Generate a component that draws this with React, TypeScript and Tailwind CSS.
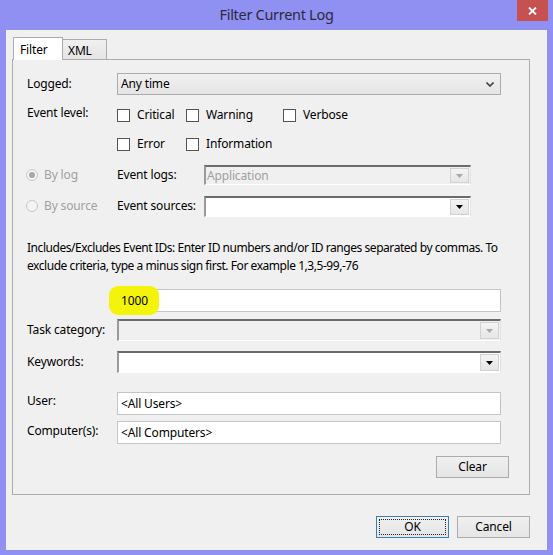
import clsx from "clsx";

const DownArrow = ({ disabled }: { disabled?: boolean }) => (
  <svg width="7" height="4" viewBox="0 0 7 4">
    <path d="M0 0h7L3.5 4z" fill={disabled ? "#a8a8a8" : "#000"} />
  </svg>
);

interface ComboProps {
  width: string;
  value?: string;
  disabled?: boolean;
  height?: string;
}

const SunkenCombo = ({ width, value, disabled, height }: ComboProps) => (
  <div
    className={clsx(
      "flex items-center border-t-2 border-l-2 border-r border-b border-t-[#6b6b6b] border-l-[#9a9a9a] border-r-[#e3e3e3] border-b-[#ffffff] pr-[1px]",
      width,
      height ?? "h-[21px]",
      disabled ? "bg-[#f0f0f0]" : "bg-white",
    )}
  >
    <span className="flex-1 pl-[1px] text-[#a0a0a0] leading-none">{value}</span>
    <div className="flex items-center justify-center w-[19px] h-[calc(100%-2px)] border border-[#d2d2d2] bg-linear-to-b from-[#f4f4f4] to-[#e6e6e6]">
      <DownArrow disabled={disabled} />
    </div>
  </div>
);

const Checkbox = ({ label, width }: { label: string; width: string }) => (
  <div className={clsx("flex items-center gap-[7px]", width)}>
    <span className="w-[13px] h-[13px] border border-[#555] bg-white" />
    <span>{label}</span>
  </div>
);

const Radio = ({ label, checked }: { label: string; checked?: boolean }) => (
  <div className="flex items-center gap-[6px] text-[#a0a0a0]">
    <span className="w-[12px] h-[12px] rounded-full border border-[#c8c8c8] bg-[#f4f4f4] flex items-center justify-center">
      {checked && <span className="w-[6px] h-[6px] rounded-full bg-[#a8a8a8]" />}
    </span>
    <span>{label}</span>
  </div>
);

const TextBox = ({ value }: { value?: string }) => (
  <div className="h-[23px] w-[384px] border border-[#c5c5c5] bg-white flex items-center pl-[3px]">
    {value}
  </div>
);

const Button = ({ label, isDefault, className }: { label: string; isDefault?: boolean; className?: string }) => (
  <div
    className={clsx(
      "w-[73px] h-[22px] border flex items-center justify-center bg-linear-to-b from-[#f0f0f0] to-[#e5e5e5] p-[2px]",
      isDefault ? "border-[#3c7fb1]" : "border-[#acacac]",
      className,
    )}
  >
    <div
      className={clsx(
        "w-full h-full flex items-center justify-center",
        isDefault && "border border-dotted border-[#222]",
      )}
    >
      {label}
    </div>
  </div>
);

export default function App() {
  return (
    <div className="w-[553px] h-[555px] bg-[#9090f3] flex flex-col font-['Noto_Sans',sans-serif] text-[12px] tracking-[-0.15px] text-black">
      {/* title bar */}
      <div className="h-[30px] flex items-center justify-center relative shrink-0">
        <span className="text-[14.5px] text-[#2a2a3a] tracking-[-0.3px]">Filter Current Log</span>
        <div className="absolute right-[5px] top-0 w-[31px] h-[21px] bg-[#c75050] flex items-center justify-center">
          <svg width="9" height="8" viewBox="0 0 9 8">
            <path d="M1 0.5L8 7.5M8 0.5L1 7.5" stroke="#fff" strokeWidth="1.8" />
          </svg>
        </div>
      </div>

      {/* body */}
      <div className="mx-[6px] h-[520px] bg-[#f0f0f0] pt-[7px] pl-[6px] pr-[17px]">
        {/* tabs */}
        <div className="flex items-end h-[22px] pl-[1px]">
          <div className="relative z-10 h-[23px] -mb-[1px] w-[50px] bg-white border border-b-0 border-[#acacac] pl-[6px] pt-[3px]">
            Filter
          </div>
          <div className="h-[20px] w-[44px] border border-l-0 border-b-0 border-[#acacac] bg-linear-to-b from-[#f0f0f0] to-[#e5e5e5] pl-[5px] pt-[2px]">
            XML
          </div>
        </div>

        {/* panel */}
        <div className="h-[436px] border border-[#acacac] bg-[#f0f0f0] flex flex-col pl-[14px] pr-[20px]">
          <div className="flex items-center mt-[13px] h-[22px]">
            <span className="w-[90px]">Logged:</span>
            <div className="w-[384px] h-[22px] border border-[#acacac] bg-linear-to-b from-[#f0f0f0] to-[#e5e5e5] flex items-center pl-[3px] pr-[6px]">
              <span className="flex-1">Any time</span>
              <svg width="8" height="5" viewBox="0 0 8 5">
                <path d="M0.5 0.5L4 4L7.5 0.5" stroke="#444" strokeWidth="1.6" fill="none" />
              </svg>
            </div>
          </div>

          <div className="flex items-center mt-[9px] h-[22px]">
            <span className="w-[90px] self-start">Event level:</span>
            <Checkbox label="Critical" width="w-[69px]" />
            <Checkbox label="Warning" width="w-[97px]" />
            <Checkbox label="Verbose" width="w-[80px]" />
          </div>
          <div className="flex items-center mt-[7px] h-[22px]">
            <span className="w-[90px]" />
            <Checkbox label="Error" width="w-[69px]" />
            <Checkbox label="Information" width="w-[97px]" />
          </div>

          <div className="flex items-center mt-[10px] h-[20px]">
            <div className="w-[90px] -ml-[1px]">
              <Radio label="By log" checked />
            </div>
            <span className="w-[88px] pl-[1px]">Event logs:</span>
            <SunkenCombo width="w-[267px]" value="Application" disabled height="h-[20px]" />
          </div>
          <div className="flex items-center mt-[11px] h-[20px]">
            <div className="w-[90px] -ml-[1px]">
              <Radio label="By source" />
            </div>
            <span className="w-[88px] pl-[1px]">Event sources:</span>
            <SunkenCombo width="w-[267px]" height="h-[21px]" />
          </div>

          <p className="mt-[23px] leading-[18px] whitespace-nowrap tracking-[-0.45px]">
            Includes/Excludes Event IDs: Enter ID numbers and/or ID ranges separated by commas. To
            <br />
            exclude criteria, type a minus sign first. For example 1,3,5-99,-76
          </p>

          <div className="flex items-center mt-[14px] h-[23px]">
            <span className="w-[90px]" />
            <div className="relative h-[23px] w-[384px] border border-[#c5c5c5] bg-white flex items-center pl-[3px]">
              <span className="absolute -left-[9px] -top-[4px] w-[50px] h-[29px] rounded-[9px] bg-[#f4f40a]" />
              <span className="relative">1000</span>
            </div>
          </div>

          <div className="flex items-center mt-[7px] h-[22px]">
            <span className="w-[90px]">Task category:</span>
            <SunkenCombo width="w-[384px]" disabled height="h-[22px]" />
          </div>

          <div className="flex items-center mt-[10px] h-[22px]">
            <span className="w-[90px]">Keywords:</span>
            <SunkenCombo width="w-[384px]" height="h-[22px]" />
          </div>

          <div className="flex items-center mt-[19px] h-[23px]">
            <span className="w-[90px] self-start">User:</span>
            <TextBox value="<All Users>" />
          </div>

          <div className="flex items-center mt-[6px] h-[23px]">
            <span className="w-[90px] self-start pt-[1px]">Computer(s):</span>
            <TextBox value="<All Computers>" />
          </div>

          <div className="flex justify-end mt-[12px]">
            <Button label="Clear" className="h-[21px]" />
          </div>
        </div>

        {/* footer buttons */}
        <div className="flex justify-end gap-[8px] mt-[21px]">
          <Button label="OK" isDefault />
          <Button label="Cancel" />
        </div>
      </div>
    </div>
  );
}
